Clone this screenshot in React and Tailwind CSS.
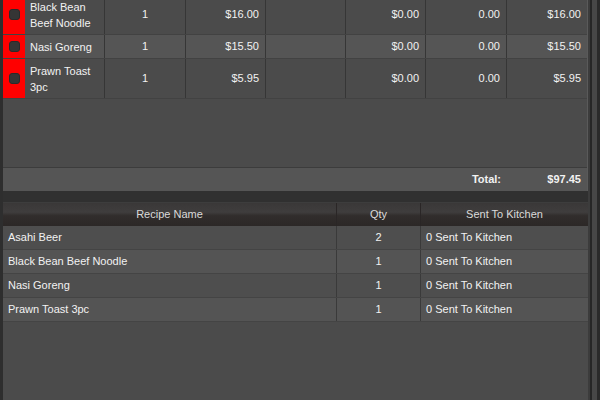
import React from 'react';

const orderRows = [
  { name: ['Black Bean', 'Beef Noodle'], qty: 1, price: '$16.00', disc: '$0.00', tax: '0.00', total: '$16.00' },
  { name: ['Nasi Goreng'], qty: 1, price: '$15.50', disc: '$0.00', tax: '0.00', total: '$15.50' },
  { name: ['Prawn Toast', '3pc'], qty: 1, price: '$5.95', disc: '$0.00', tax: '0.00', total: '$5.95' },
];

const kitchenRows = [
  { name: 'Asahi Beer', qty: 2 },
  { name: 'Black Bean Beef Noodle', qty: 1 },
  { name: 'Nasi Goreng', qty: 1 },
  { name: 'Prawn Toast 3pc', qty: 1 },
];

function OrderRow({ row, index }) {
  const tall = row.name.length > 1;
  return (
    <div
      className={`flex border-b border-[#424242] ${tall ? 'h-[40px]' : 'h-[24px]'} ${index % 2 === 1 ? 'bg-[#555555]' : 'bg-[#4b4b4b]'}`}
    >
      <div className="w-[22px] shrink-0 bg-[#ff0000] flex items-center justify-center">
        <div className="w-[11px] h-[11px] rounded-[3px] bg-[#353535] border border-[#2a2a2a]" />
      </div>
      <div className="w-[80px] shrink-0 flex flex-col justify-center pl-[5px] leading-[16px] border-r border-[#363636]">
        {row.name.map((line) => (
          <span key={line}>{line}</span>
        ))}
      </div>
      <div className="w-[81px] shrink-0 flex items-center justify-center border-r border-[#363636]">{row.qty}</div>
      <div className="w-[80px] shrink-0 flex items-center justify-end pr-[6px] border-r border-[#363636]">{row.price}</div>
      <div className="w-[80px] shrink-0 border-r border-[#363636]" />
      <div className="w-[80px] shrink-0 flex items-center justify-end pr-[6px] border-r border-[#363636]">{row.disc}</div>
      <div className="w-[81px] shrink-0 flex items-center justify-end pr-[6px] border-r border-[#363636]">{row.tax}</div>
      <div className="flex-1 flex items-center justify-end pr-[6px]">{row.total}</div>
    </div>
  );
}

function KitchenRow({ row, index }) {
  return (
    <div
      className={`flex h-[24px] border-b border-[#444444] ${index % 2 === 1 ? 'bg-[#545454]' : 'bg-[#4e4e4e]'}`}
    >
      <div className="w-[334px] shrink-0 flex items-center pl-[5px] border-r border-[#3a3a3a]">{row.name}</div>
      <div className="w-[84px] shrink-0 flex items-center justify-center border-r border-[#3a3a3a]">{row.qty}</div>
      <div className="flex-1 flex items-center pl-[5px]">0 Sent To Kitchen</div>
    </div>
  );
}

export default function App() {
  return (
    <div className="w-[600px] h-[400px] overflow-hidden flex bg-[#2c2c2c] text-[11px] text-[#f2f2f2] font-['Liberation_Sans',Arial,sans-serif]">
      {/* left frame */}
      <div className="w-[3px] shrink-0 bg-[#2e2e2e]" />

      <div className="w-[585px] shrink-0 flex flex-col">
        {/* order lines */}
        <div className="bg-[#4b4b4b] -mt-[5px] border-r border-[#5a5a5a]">
          {orderRows.map((row, i) => (
            <OrderRow key={i} row={row} index={i} />
          ))}
          <div className="h-[68px]" />
          <div className="flex h-[24px] items-center bg-[#555555] border-t border-[#3c3c3c]">
            <div className="w-[504px] shrink-0 text-right pr-[6px] font-bold">Total:</div>
            <div className="flex-1 text-right pr-[6px] font-bold">$97.45</div>
          </div>
        </div>

        <div className="h-[11px] bg-[#303030]" />

        {/* kitchen table */}
        <div className="flex-1 bg-[#4b4b4b]">
          <div className="flex h-[24px] text-[#dadada] bg-[linear-gradient(#3a3838_0%,#3f3d3d_40%,#312d2c_55%,#2c2827_100%)] border-t border-[#3d3d3d]">
            <div className="w-[334px] shrink-0 flex items-center justify-center border-r border-[#2a2626]">Recipe Name</div>
            <div className="w-[84px] shrink-0 flex items-center justify-center border-r border-[#2a2626]">Qty</div>
            <div className="flex-1 flex items-center justify-center">Sent To Kitchen</div>
          </div>
          {kitchenRows.map((row, i) => (
            <KitchenRow key={i} row={row} index={i} />
          ))}
        </div>
      </div>

      {/* right frame / scroll rail */}
      <div className="w-[2px] shrink-0 bg-[#3c3c3c]" />
      <div className="w-[2px] shrink-0 bg-[#262626]" />
      <div className="w-[5px] shrink-0 bg-[#474747]" />
      <div className="flex-1 bg-[#2a2a2a]" />
    </div>
  );
}
